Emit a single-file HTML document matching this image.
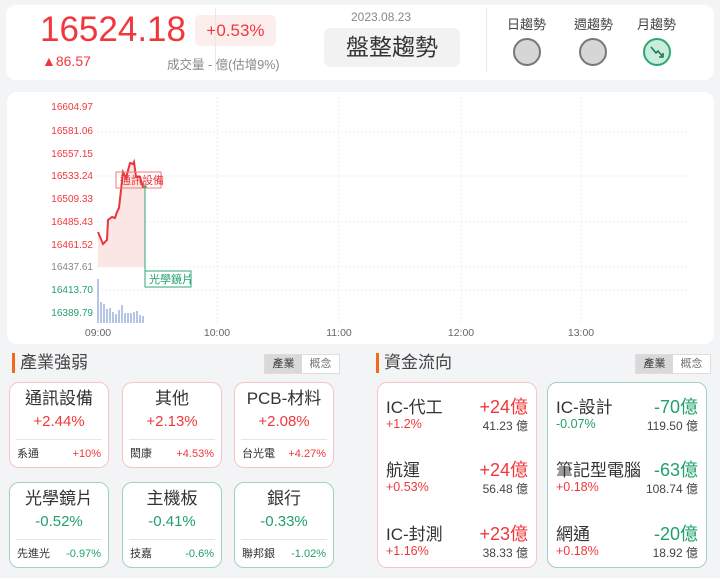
<!DOCTYPE html>
<html><head><meta charset="utf-8"><style>
*{box-sizing:border-box;margin:0;padding:0}
body{width:720px;height:578px;background:#f3f4f6;font-family:"Liberation Sans","Noto Sans CJK TC",sans-serif;position:relative;overflow:hidden;color:#333}
.abs{position:absolute}
.card{position:absolute;background:#fff;border-radius:10px}
.red{color:#f0383c}.grn{color:#22a06b}
.ic{position:absolute;width:100px;height:86px;border:1.5px solid #f7c5c7;border-radius:10px;background:#fff;text-align:center}
.ic.g{border-color:#9fd3bd}
.ic .t{font-size:17px;margin-top:5px;color:#333;line-height:22px}
.ic .p{font-size:15px;margin-top:2px;line-height:20px}
.ic hr{border:0;border-top:1px solid #e6e6e6;margin:7px 6px 0}
.ic .b{display:flex;justify-content:space-between;padding:0 7px;font-size:11px;margin-top:7px;line-height:14px}
.ic .b span:first-child{color:#333}
.hd{position:absolute;font-size:17px;color:#444;border-left:3px solid #f26b1d;padding-left:5px;line-height:20px}
.tabs{position:absolute;display:flex;border:1px solid #ddd;font-size:11px;height:20px;line-height:18px}
.tabs span{width:37px;text-align:center;color:#777;background:#fff}
.tabs span:first-child{background:#d9d9d9;color:#333}
.fb{position:absolute;width:160px;height:186px;border:1.5px solid #f7c5c7;border-radius:10px;background:#fff}
.fb.g{border-color:#9fd3bd}
.row{position:absolute;left:8px;right:8px}
.row .n{position:absolute;left:0;top:0;font-size:17px;color:#333}
.row .v{position:absolute;right:0;top:0;font-size:18px}
.row .pc{position:absolute;left:0;top:24px;font-size:12.5px}
.row .a{position:absolute;right:0;top:24px;font-size:12px;color:#444}
.circ{position:absolute;width:28px;height:28px;border-radius:50%;border:2px solid #777;background:#d6d6d6}
</style></head><body>
<div class="card" style="left:6px;top:5px;width:708px;height:75px"></div>
<div class="abs red" style="left:40px;top:9px;font-size:35px;line-height:42px">16524.18</div>
<div class="abs red" style="left:195px;top:15px;width:81px;height:31px;background:#fdeeee;border-radius:5px;font-size:17px;line-height:31px;text-align:center">+0.53%</div>
<div class="abs red" style="left:42px;top:53px;font-size:14px">▲86.57</div>
<div class="abs" style="left:167px;top:54px;font-size:12.5px;color:#888">成交量 - 億(估增9%)</div>
<div class="abs" style="left:215px;top:8px;width:1px;height:64px;background:#e8e8e8"></div>
<div class="abs" style="left:351px;top:10px;font-size:12px;color:#888">2023.08.23</div>
<div class="abs" style="left:324px;top:28px;width:136px;height:39px;background:#f2f2f2;border-radius:7px;font-size:23px;line-height:39px;text-align:center;color:#333">盤整趨勢</div>
<div class="abs" style="left:486px;top:8px;width:1px;height:64px;background:#e8e8e8"></div>
<div class="abs" style="left:507px;top:14px;font-size:13px;color:#444">日趨勢</div>
<div class="abs" style="left:574px;top:14px;font-size:13px;color:#444">週趨勢</div>
<div class="abs" style="left:637px;top:14px;font-size:13px;color:#444">月趨勢</div>
<div class="circ" style="left:513px;top:38px"></div>
<div class="circ" style="left:579px;top:38px"></div>
<div class="circ" style="left:643px;top:38px;border-color:#2aa872;background:#c9ecdc"></div>
<svg class="abs" style="left:643px;top:38px" width="28" height="28"><path d="M8 9 L13 15 L15 13 L20 19 M20 15 L20 19 L16 19" stroke="#1d7a55" stroke-width="1.6" fill="none"/></svg>

<div class="card" style="left:7px;top:92px;width:707px;height:252px"></div>
<svg class="abs" style="left:0;top:0" width="720" height="350">
<g stroke="#ececec" stroke-dasharray="2,2" stroke-width="1">
<line x1="97" x2="687" y1="132" y2="132"/><line x1="97" x2="687" y1="176" y2="176"/><line x1="97" x2="687" y1="222" y2="222"/><line x1="97" x2="687" y1="267" y2="267"/><line x1="97" x2="687" y1="290" y2="290"/>
<line x1="217" x2="217" y1="97" y2="323"/><line x1="339" x2="339" y1="97" y2="323"/><line x1="461" x2="461" y1="97" y2="323"/><line x1="581" x2="581" y1="97" y2="323"/>
</g>
<path d="M98 232 L103 244 L107 240 L108 220 L112 217 L115 218 L117 212 L119 208 L123 172 L126 178 L130 163 L133 164 L134 162 L136 177 L140 177 L143 187 L145 187 L145 267 L98 267Z" fill="#fbe6e6"/>
<path d="M98 232 L103 244 L107 240 L108 220 L112 217 L115 218 L117 212 L119 208 L123 172 L126 178 L130 163 L133 164 L134 162 L136 177 L140 177 L143 187 L145 187" fill="none" stroke="#e8363a" stroke-width="2"/>
<g fill="#b6c4e6">
<rect x="97" y="279" width="2" height="44"/><rect x="100" y="302" width="2" height="21"/><rect x="103" y="304" width="2" height="19"/><rect x="106" y="309" width="2" height="14"/><rect x="109" y="308" width="2" height="15"/><rect x="112" y="312" width="2" height="11"/><rect x="115" y="314" width="2" height="9"/><rect x="118" y="310" width="2" height="13"/><rect x="121" y="305" width="2" height="18"/><rect x="124" y="313" width="2" height="10"/><rect x="127" y="313" width="2" height="10"/><rect x="130" y="313" width="2" height="10"/><rect x="133" y="312" width="2" height="11"/><rect x="136" y="311" width="2" height="12"/><rect x="139" y="315" width="2" height="8"/><rect x="142" y="316" width="2" height="7"/>
</g>
<line x1="145" y1="187" x2="145" y2="272" stroke="#2aa872"/>
<circle cx="145" cy="187" r="1.8" fill="#2aa872"/>
<rect x="116" y="172" width="45" height="16" fill="none" stroke="#f07a7c"/>
<text x="120" y="184" font-size="11" fill="#e8363a" font-family="Liberation Sans,Noto Sans CJK TC,sans-serif">通訊設備</text>
<rect x="145" y="271" width="46" height="16" fill="#fff" stroke="#2aa872"/>
<text x="149" y="283" font-size="11" fill="#22a06b" font-family="Liberation Sans,Noto Sans CJK TC,sans-serif">光學鏡片</text>
<g font-size="10" font-family="Liberation Sans,sans-serif" text-anchor="end">
<text x="93" y="110" fill="#f0383c">16604.97</text><text x="93" y="134" fill="#f0383c">16581.06</text><text x="93" y="157" fill="#f0383c">16557.15</text><text x="93" y="179" fill="#f0383c">16533.24</text><text x="93" y="202" fill="#f0383c">16509.33</text><text x="93" y="225" fill="#f0383c">16485.43</text><text x="93" y="248" fill="#f0383c">16461.52</text><text x="93" y="270" fill="#888">16437.61</text><text x="93" y="293" fill="#22a06b">16413.70</text><text x="93" y="316" fill="#22a06b">16389.79</text>
</g>
<g font-size="10.5" font-family="Liberation Sans,sans-serif" fill="#666" text-anchor="middle">
<text x="98" y="336">09:00</text><text x="217" y="336">10:00</text><text x="339" y="336">11:00</text><text x="461" y="336">12:00</text><text x="581" y="336">13:00</text>
</g>
</svg>

<div class="hd" style="left:12px;top:353px">產業強弱</div>
<div class="tabs" style="left:264px;top:354px"><span>產業</span><span>概念</span></div>
<div class="hd" style="left:376px;top:353px">資金流向</div>
<div class="tabs" style="left:635px;top:354px"><span>產業</span><span>概念</span></div>

<div class="ic" style="left:9px;top:382px"><div class="t">通訊設備</div><div class="p red">+2.44%</div><hr><div class="b"><span>系通</span><span class="red">+10%</span></div></div>
<div class="ic" style="left:122px;top:382px"><div class="t">其他</div><div class="p red">+2.13%</div><hr><div class="b"><span>閎康</span><span class="red">+4.53%</span></div></div>
<div class="ic" style="left:234px;top:382px"><div class="t">PCB-材料</div><div class="p red">+2.08%</div><hr><div class="b"><span>台光電</span><span class="red">+4.27%</span></div></div>
<div class="ic g" style="left:9px;top:482px"><div class="t">光學鏡片</div><div class="p grn">-0.52%</div><hr><div class="b"><span>先進光</span><span class="grn">-0.97%</span></div></div>
<div class="ic g" style="left:122px;top:482px"><div class="t">主機板</div><div class="p grn">-0.41%</div><hr><div class="b"><span>技嘉</span><span class="grn">-0.6%</span></div></div>
<div class="ic g" style="left:234px;top:482px"><div class="t">銀行</div><div class="p grn">-0.33%</div><hr><div class="b"><span>聯邦銀</span><span class="grn">-1.02%</span></div></div>

<div class="fb" style="left:377px;top:382px">
<div class="row" style="top:10px"><span class="n">IC-代工</span><span class="v red">+24億</span><span class="pc red">+1.2%</span><span class="a">41.23 億</span></div>
<div class="row" style="top:73px"><span class="n">航運</span><span class="v red">+24億</span><span class="pc red">+0.53%</span><span class="a">56.48 億</span></div>
<div class="row" style="top:137px"><span class="n">IC-封測</span><span class="v red">+23億</span><span class="pc red">+1.16%</span><span class="a">38.33 億</span></div>
</div>
<div class="fb g" style="left:547px;top:382px">
<div class="row" style="top:10px"><span class="n">IC-設計</span><span class="v grn">-70億</span><span class="pc grn">-0.07%</span><span class="a">119.50 億</span></div>
<div class="row" style="top:73px"><span class="n">筆記型電腦</span><span class="v grn">-63億</span><span class="pc red">+0.18%</span><span class="a">108.74 億</span></div>
<div class="row" style="top:137px"><span class="n">網通</span><span class="v grn">-20億</span><span class="pc red">+0.18%</span><span class="a">18.92 億</span></div>
</div>
</body></html>
